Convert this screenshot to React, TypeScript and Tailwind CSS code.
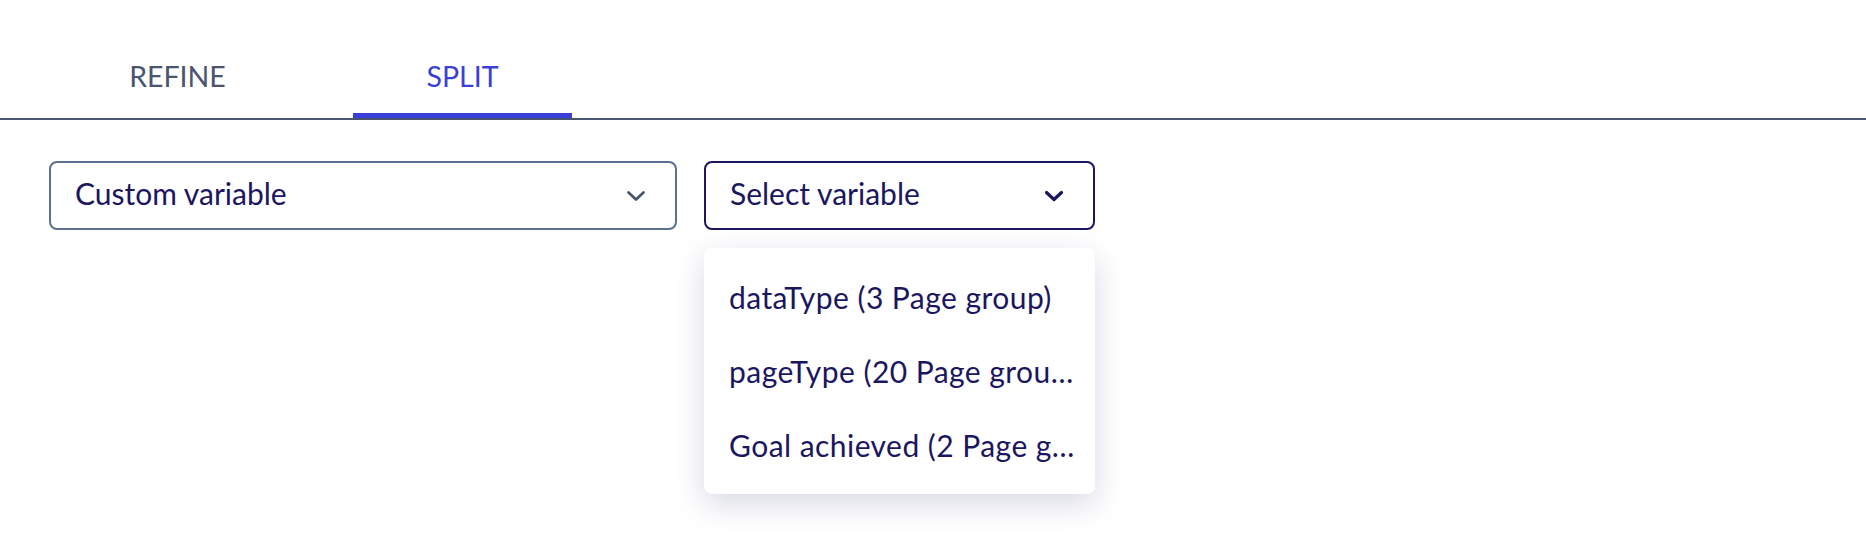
import { useState } from 'react';

const options = [
    'dataType (3 Page group)',
    'pageType (20 Page group)',
    'Goal achieved (2 Page group)',
];

function Chevron({ className, strokeWidth }: { className: string; strokeWidth: number }) {
    return (
        <svg viewBox="0 0 20 12" className={className} fill="none" stroke="currentColor" strokeWidth={strokeWidth} strokeLinecap="round" strokeLinejoin="round">
            <path d="M2.5 2.5l7.5 7 7.5-7" />
        </svg>
    );
}

export default function App() {
    const [tab, setTab] = useState<'refine' | 'split'>('split');

    return (
        <div className="w-[1866px] h-[548px] bg-white text-[#1b1660]" style={{ fontFamily: 'Lato, "Open Sans", sans-serif' }}>
            {/* Tabs */}
            <div className="flex items-end h-[118px] pl-[68px] gap-[66px] border-b-2 border-[#4a5570] box-content">
                {(['refine', 'split'] as const).map((t) => (
                    <button
                        key={t}
                        onClick={() => setTab(t)}
                        className={`w-[219px] h-[78px] flex items-center justify-center text-[28.5px] uppercase border-b-[5px] ${
                            tab === t ? 'text-[#3a3fd9] border-[#3a3fd9]' : 'text-[#4a5570] border-transparent'
                        }`}
                    >
                        {t}
                    </button>
                ))}
            </div>

            {/* Selects */}
            <div className="flex gap-[27px] pl-[49px] mt-[41px]">
                <div className="w-[628px] h-[69px] border-2 border-[#5b6f8f] rounded-[8px] flex items-center justify-between pl-[24px] pr-[29px] pb-[4px]">
                    <span className="text-[30px]">Custom variable</span>
                    <Chevron className="w-[20px] h-[12px] text-[#4a5570] mt-[4px]" strokeWidth={2.8} />
                </div>

                <div className="relative w-[391px]">
                    <div className="h-[69px] border-2 border-[#1b1660] rounded-[8px] flex items-center justify-between pl-[24px] pr-[29px] pb-[4px]">
                        <span className="text-[30px]">Select variable</span>
                        <Chevron className="w-[20px] h-[12px] text-[#1b1660] mt-[4px]" strokeWidth={3.2} />
                    </div>

                    <div className="absolute left-0 top-[87px] w-[391px] bg-white rounded-[8px] py-[12px] shadow-[0_10px_30px_rgba(40,40,110,0.18)]">
                        {options.map((o) => (
                            <div key={o} className="h-[74px] flex items-center pl-[25px] pr-[20px]">
                                <span className="text-[30px] tracking-[0.45px] truncate">{o}</span>
                            </div>
                        ))}
                    </div>
                </div>
            </div>
        </div>
    );
}
